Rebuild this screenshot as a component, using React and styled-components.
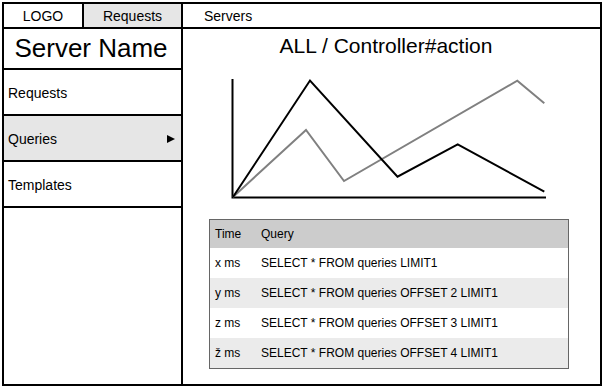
import React from "react";
import styled, { createGlobalStyle } from "styled-components";

const GlobalStyle = createGlobalStyle`
  body {
    margin: 0;
    font-family: "Liberation Sans", Arial, sans-serif;
    color: #000;
    background: #fff;
  }
`;

const tabs = [
  { label: "LOGO", width: 80, center: true },
  { label: "Requests", width: 99, center: true, active: true },
  { label: "Servers", width: null, center: false },
];

const menu = [
  { label: "Requests" },
  { label: "Queries", active: true },
  { label: "Templates" },
];

const queries = [
  { time: "x ms", sql: "SELECT * FROM queries LIMIT1" },
  { time: "y ms", sql: "SELECT * FROM queries OFFSET 2 LIMIT1" },
  { time: "z ms", sql: "SELECT * FROM queries OFFSET 3 LIMIT1" },
  { time: "ž ms", sql: "SELECT * FROM queries OFFSET 4 LIMIT1" },
];

const App = () => {
  return (
    <>
      <GlobalStyle />
      <Frame>
        <TopBar>
          {tabs.map((tab) => (
            <Tab
              key={tab.label}
              $width={tab.width}
              $center={tab.center}
              $active={tab.active}
            >
              {tab.label}
            </Tab>
          ))}
        </TopBar>
        <Body>
          <Sidebar>
            <SidebarTitle>Server Name</SidebarTitle>
            {menu.map((item) => (
              <MenuItem key={item.label} $active={item.active}>
                {item.label}
                {item.active && <Arrow />}
              </MenuItem>
            ))}
          </Sidebar>
          <Content>
            <Title>ALL / Controller#action</Title>
            <Chart width="316" height="122" viewBox="0 0 316 122">
              <polyline
                points="1.5,1 1.5,119.5 315,119.5"
                fill="none"
                stroke="#000"
                strokeWidth="2"
              />
              <polyline
                points="2,119 75,52 113,103 286.3,2.7 313.3,25.3"
                fill="none"
                stroke="#808080"
                strokeWidth="2"
              />
              <polyline
                points="2,119 79,2.5 166.5,98.7 226.7,66.3 313.3,113.7"
                fill="none"
                stroke="#000"
                strokeWidth="2"
              />
            </Chart>
            <Table>
              <HeadRow>
                <Cell>Time</Cell>
                <Cell>Query</Cell>
              </HeadRow>
              {queries.map((q, i) => (
                <Row key={q.time} $striped={i % 2 === 1}>
                  <Cell>{q.time}</Cell>
                  <Cell>{q.sql}</Cell>
                </Row>
              ))}
            </Table>
          </Content>
        </Body>
      </Frame>
    </>
  );
};

export default App;

const Frame = styled.div`
  box-sizing: border-box;
  margin: 2px;
  width: 600px;
  height: 384px;
  border: 2px solid #000;
  display: flex;
  flex-direction: column;
`;

const TopBar = styled.div`
  box-sizing: border-box;
  height: 25px;
  border-bottom: 2px solid #000;
  display: flex;
`;

const Tab = styled.div`
  box-sizing: border-box;
  flex: ${(p) => (p.$width ? `0 0 ${p.$width}px` : "1")};
  display: flex;
  align-items: center;
  justify-content: ${(p) => (p.$center ? "center" : "flex-start")};
  padding-left: ${(p) => (p.$center ? "0" : "21px")};
  border-right: ${(p) => (p.$width ? "2px solid #000" : "none")};
  background: ${(p) => (p.$active ? "#e6e6e6" : "#fff")};
  font-size: 14px;
`;

const Body = styled.div`
  flex: 1;
  display: flex;
  min-height: 0;
`;

const Sidebar = styled.div`
  box-sizing: border-box;
  flex: 0 0 179px;
  border-right: 2px solid #000;
  display: flex;
  flex-direction: column;
`;

const SidebarTitle = styled.div`
  box-sizing: border-box;
  height: 41px;
  border-bottom: 2px solid #000;
  display: flex;
  align-items: center;
  justify-content: center;
  padding-right: 3px;
  font-size: 26px;
`;

const MenuItem = styled.div`
  box-sizing: border-box;
  height: 46px;
  border-bottom: 2px solid #000;
  display: flex;
  align-items: center;
  justify-content: space-between;
  padding: 1px 6px 0 4px;
  background: ${(p) => (p.$active ? "#e6e6e6" : "#fff")};
  font-size: 14px;
`;

const Arrow = styled.span`
  width: 0;
  height: 0;
  border-left: 8px solid #000;
  border-top: 4.5px solid transparent;
  border-bottom: 4.5px solid transparent;
`;

const Content = styled.div`
  flex: 1;
  display: flex;
  flex-direction: column;
`;

const Title = styled.div`
  padding: 6px 11px 0 0;
  line-height: 21px;
  font-size: 21px;
  text-align: center;
`;

const Chart = styled.svg`
  display: block;
  margin: 22px 0 0 48px;
`;

const Table = styled.div`
  box-sizing: border-box;
  width: 360px;
  margin: 19px 0 0 26px;
  border: 1px solid #666;
  font-size: 12px;
`;

const Row = styled.div`
  display: grid;
  grid-template-columns: 46px 1fr;
  align-items: center;
  height: 30px;
  background: ${(p) => (p.$striped ? "#ebebeb" : "#fff")};
`;

const HeadRow = styled(Row)`
  height: 28px;
  background: #ccc;
`;

const Cell = styled.div`
  padding-left: 5px;
`;
